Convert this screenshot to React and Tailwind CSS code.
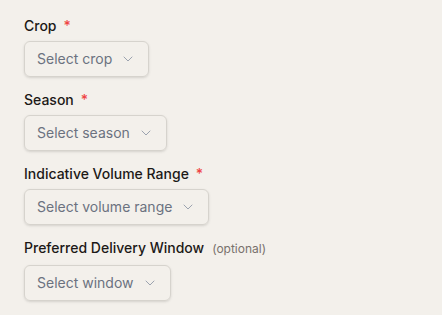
import { ChevronDown } from 'lucide-react';

const fields = [
  { label: 'Crop', placeholder: 'Select crop', required: true },
  { label: 'Season', placeholder: 'Select season', required: true },
  { label: 'Indicative Volume Range', placeholder: 'Select volume range', required: true },
  { label: 'Preferred Delivery Window', placeholder: 'Select window', required: false },
];

function SelectField({ label, placeholder, required }) {
  return (
    <div className="flex flex-col gap-2">
      <label className="text-sm font-medium leading-none text-[#1c1917]">
        {label}
        {required ? (
          <span className="ml-[7px] text-[#ef4444]">*</span>
        ) : (
          <span className="ml-2 text-xs font-normal text-[#78716c]">(optional)</span>
        )}
      </label>
      <button
        type="button"
        className="flex h-9 w-fit items-center gap-2 rounded-md border border-[#d6d3cd] bg-transparent px-3 text-sm text-[#6b7280] shadow-sm"
      >
        <span>{placeholder}</span>
        <ChevronDown className="h-4 w-4 text-[#9ca3af]" strokeWidth={1.5} />
      </button>
    </div>
  );
}

export default function App() {
  return (
    <div className="min-h-screen bg-[#f3f0eb] px-6 pt-[19px] font-['Inter',sans-serif]">
      <div className="flex flex-col gap-4">
        {fields.map((f) => (
          <SelectField key={f.label} {...f} />
        ))}
      </div>
    </div>
  );
}
